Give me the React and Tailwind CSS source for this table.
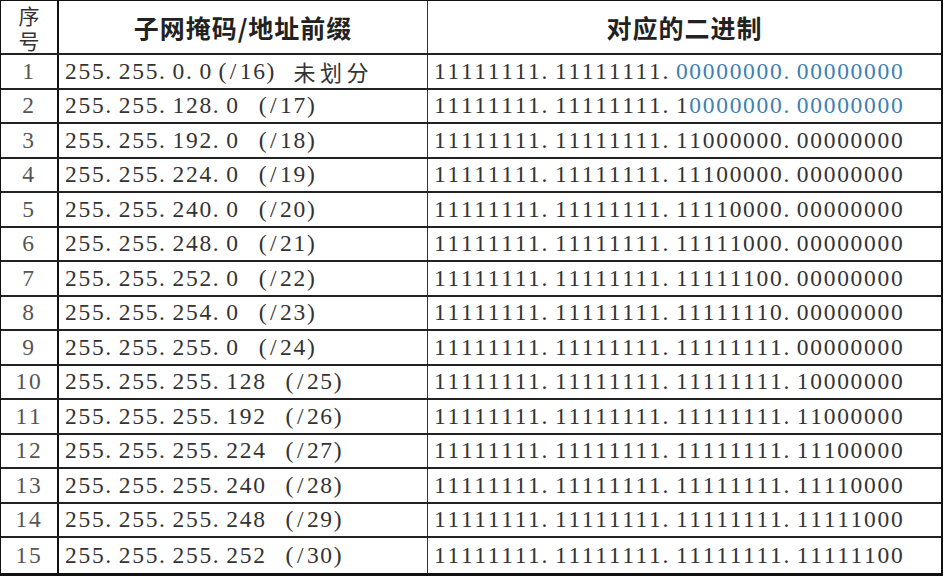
import React from "react";

const serif = { fontFamily: '"Liberation Serif", "Times New Roman", serif' };
const cjk = { fontFamily: '"Noto Sans CJK SC", "Noto Sans", sans-serif' };

const toBinary = (prefix) => {
  const bits = "1".repeat(prefix) + "0".repeat(32 - prefix);
  return [0, 8, 16, 24].map((i) => bits.slice(i, i + 8)).join(".");
};

const masks = [
  "255.255.0.0",
  "255.255.128.0",
  "255.255.192.0",
  "255.255.224.0",
  "255.255.240.0",
  "255.255.248.0",
  "255.255.252.0",
  "255.255.254.0",
  "255.255.255.0",
  "255.255.255.128",
  "255.255.255.192",
  "255.255.255.224",
  "255.255.255.240",
  "255.255.255.248",
  "255.255.255.252",
];

const rows = masks.map((mask, i) => ({ no: i + 1, mask, prefix: 16 + i }));

// rows 1 and 2 have the unsubnetted bits in blue
const blueFrom = { 16: 18, 17: 19 };

const alignFor = (ch) => {
  if (ch === "(") return "text-right";
  if (ch === "/") return "text-center";
  return "text-left";
};

// half-width cells, like the song typeface of the original sheet
const Cells = ({ text, className = "" }) =>
  text.split("").map((ch, i) => (
    <span key={i} className={`inline-block w-[13.45px] ${alignFor(ch)} ${className}`}>
      {ch === " " ? "\u00a0" : ch}
    </span>
  ));

const BinaryCell = ({ prefix }) => {
  const text = toBinary(prefix);
  const cut = blueFrom[prefix];
  if (!cut) return <Cells text={text} />;
  return (
    <>
      <Cells text={text.slice(0, cut)} />
      <Cells text={text.slice(cut)} className="text-[#3d80b3]" />
    </>
  );
};

export default function App() {
  return (
    <div className="min-h-[586px] w-[949px] bg-white">
      <div className="w-[943px] border-t border-l border-r-2 border-b-[3px] border-[#111] text-[#333]">
        {/* header */}
        <div className="flex h-[54px] border-b-2 border-[#222]" style={cjk}>
          <div className="flex w-[58px] shrink-0 flex-col items-center justify-center gap-[1px] border-r-2 border-[#111] text-[21px] text-[#333]">
            <span className="block h-[24px] leading-[24px]">序</span>
            <span className="block h-[24px] leading-[24px]">号</span>
          </div>
          <div className="flex w-[369px] shrink-0 items-center justify-center border-r border-[#333] text-[25px] font-bold leading-none tracking-[1px] text-[#222]">
            子网掩码/地址前缀
          </div>
          <div className="flex flex-1 items-center justify-center text-[25px] font-bold leading-none tracking-[1px] text-[#222]">
            对应的二进制
          </div>
        </div>

        {/* body */}
        {rows.map((r, idx) => (
          <div
            key={r.no}
            className={`flex h-[34.5px] text-[23.5px] ${idx < rows.length - 1 ? "border-b-2 border-[#222]" : ""}`}
            style={serif}
          >
            <div className="flex w-[58px] shrink-0 items-center justify-center border-r-2 border-[#111] text-[#555]">
              <span>
                <Cells text={String(r.no)} />
              </span>
            </div>
            <div className="flex w-[369px] shrink-0 items-center whitespace-nowrap border-r border-[#333] pl-[6px]">
              {r.no === 1 ? (
                <>
                  <Cells text={`${r.mask}(/${r.prefix}) `} />
                  <span
                    className="text-[22px] leading-none tracking-[4.5px]"
                    style={cjk}
                  >
                    未划分
                  </span>
                </>
              ) : (
                <Cells text={`${r.mask} (/${r.prefix})`} />
              )}
            </div>
            <div className="flex flex-1 items-center whitespace-nowrap pl-[6px]">
              <BinaryCell prefix={r.prefix} />
            </div>
          </div>
        ))}
      </div>
    </div>
  );
}
